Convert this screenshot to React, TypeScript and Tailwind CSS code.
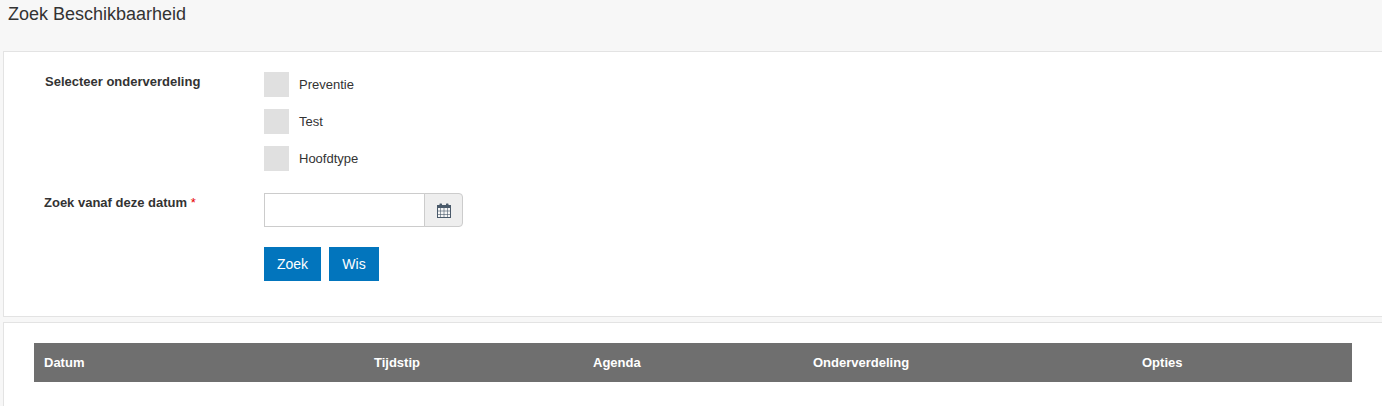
import React from 'react';

const options = ['Preventie', 'Test', 'Hoofdtype'];

function CalendarIcon() {
  return (
    <svg width="14" height="15" viewBox="0 0 14 15" className="text-[#4a5a6a]">
      <rect x="0.5" y="2.5" width="13" height="12" fill="#f6f6f6" stroke="currentColor" />
      <rect x="0" y="2" width="14" height="3" fill="currentColor" />
      <rect x="2.5" y="0.5" width="2.5" height="3.5" rx="0.6" fill="currentColor" />
      <rect x="9" y="0.5" width="2.5" height="3.5" rx="0.6" fill="currentColor" />
      <path d="M0 8h14M0 11.5h14M3.5 5v10M7 5v10M10.5 5v10" stroke="currentColor" strokeWidth="1" opacity="0.6" fill="none" />
    </svg>
  );
}

function OptionRow({ label }: { label: string }) {
  return (
    <div className="flex h-[25px] items-center">
      <div className="w-[25px] h-[25px] bg-[#e0e0e0]" />
      <span className="ml-[10px] text-[13px] leading-[25px] text-[#333]">{label}</span>
    </div>
  );
}

export default function App() {
  return (
    <div className="h-[406px] overflow-hidden bg-[#f7f7f7] font-['Liberation_Sans',Arial,sans-serif] text-[#333]">
      {/* Page title */}
      <div className="h-[51px] pl-[8px] pt-[4px]">
        <h1 className="text-[18px] leading-[20px] text-[#333]">Zoek Beschikbaarheid</h1>
      </div>

      {/* Search form */}
      <div className="ml-[3px] h-[266px] border border-r-0 border-[#e3e3e3] bg-white flex">
        <div className="w-[260px] shrink-0 pt-[21px] text-[13px] font-bold leading-[18px]">
          <div className="pl-[41px]">Selecteer onderverdeling</div>
          <div className="pl-[40px] mt-[103px]">
            Zoek vanaf deze datum <span className="text-[#e60000] font-normal">*</span>
          </div>
        </div>
        <div className="pt-[20px]">
          <div className="flex flex-col gap-[12px]">
            {options.map((o) => (
              <OptionRow key={o} label={o} />
            ))}
          </div>
          <div className="mt-[22px] flex h-[34px] w-[199px]">
            <input className="w-[161px] h-[34px] border border-[#ccc] bg-white outline-none" />
            <div className="w-[39px] h-[34px] -ml-px border border-[#ccc] bg-[#eee] rounded-r-[4px] flex items-center justify-center">
              <CalendarIcon />
            </div>
          </div>
          <div className="mt-[20px] flex gap-[8px]">
            <button className="w-[57px] h-[34px] bg-[#0275bd] text-white text-[14px]">Zoek</button>
            <button className="w-[50px] h-[34px] bg-[#0275bd] text-white text-[14px]">Wis</button>
          </div>
        </div>
      </div>

      {/* Results */}
      <div className="ml-[3px] mt-[5px] h-[90px] border-t border-l border-[#e3e3e3] bg-white pl-[30px] pr-[30px] pt-[20px]">
        <div className="h-[39px] bg-[#6f6f6f] flex items-center text-white text-[13px] font-bold">
          <div className="w-[340px] pl-[10px]">Datum</div>
          <div className="w-[219px]">Tijdstip</div>
          <div className="w-[220px]">Agenda</div>
          <div className="w-[329px]">Onderverdeling</div>
          <div>Opties</div>
        </div>
      </div>
    </div>
  );
}
